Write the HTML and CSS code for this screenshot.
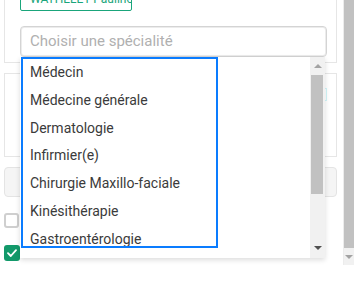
FILE: index.html
```html
<!DOCTYPE html>
<html lang="fr">
<head>
    <meta charset="UTF-8">
    <meta name="viewport" content="width=device-width, initial-scale=1.0">
    <title>Spécialité</title>
    <link rel="stylesheet" href="styles.css">
</head>
<body>
    <div class="viewport">
        <div class="page">
            <!-- Praticien -->
            <div class="card card-top">
                <button class="btn-outline">WATHELET Pauline</button>
                <div class="select">Choisir une spécialité</div>
            </div>

            <div class="card card-second">
                <div class="field-focus"></div>
            </div>

            <div class="btn-gray"></div>

            <div class="check-row"><span class="checkbox"></span></div>
            <div class="check-row checked">
                <span class="checkbox">
                    <svg width="10" height="8" viewBox="0 0 10 8"><path d="M1 4.2 L3.8 7 L9 1.2" fill="none" stroke="#fff" stroke-width="1.8" stroke-linecap="round" stroke-linejoin="round"/></svg>
                </span>
            </div>

            <!-- Dropdown -->
            <div class="dropdown">
                <div class="dropdown-list">
                    <ul class="options">
                        <li>Médecin</li>
                        <li>Médecine générale</li>
                        <li>Dermatologie</li>
                        <li>Infirmier(e)</li>
                        <li>Chirurgie Maxillo-faciale</li>
                        <li>Kinésithérapie</li>
                        <li>Gastroentérologie</li>
                    </ul>
                </div>
                <div class="scrollbar">
                    <div class="arrow up"></div>
                    <div class="thumb"></div>
                    <div class="track"></div>
                    <div class="arrow down"></div>
                </div>
            </div>
        </div>

        <div class="page-scrollbar">
            <div class="thumb"></div>
            <div class="arrow down"></div>
        </div>
    </div>
</body>
</html>
```

FILE: styles.css
```css
* {
    margin: 0;
    padding: 0;
    box-sizing: border-box;
}

body {
    font-family: Roboto, 'Liberation Sans', sans-serif;
    background: #fff;
    overflow: hidden;
}

.viewport {
    display: flex;
    height: 265px;
}

.page {
    flex: 1;
    position: relative;
    padding-left: 4px;
    padding-right: 6px;
    overflow: hidden;
}

.card {
    border: 1px solid #e6e6e6;
    background: #fff;
}

.card-top {
    margin-top: -34px;
    padding: 15px 9px 5px 15px;
}

.btn-outline {
    display: block;
    width: 112px;
    height: 29px;
    border: 1px solid #1aa57b;
    border-radius: 2px;
    background: #fff;
    color: #1aa57b;
    font-family: inherit;
    font-size: 12px;
    line-height: 20px;
    padding: 5px 0 0 9px;
    text-align: left;
    white-space: nowrap;
    overflow: hidden;
}

.select {
    margin-top: 15px;
    height: 31px;
    border: 1px solid #d4d4d4;
    border-radius: 4px;
    box-shadow: inset 0 0 0 1px #ececec;
    padding-left: 9px;
    font-size: 15px;
    line-height: 29px;
    color: #b0b0b0;
}

.card-second {
    margin-top: 10px;
    height: 84px;
    padding: 14px 9px 0 15px;
}

.field-focus {
    height: 13px;
    border: 1px solid #d2f6f9;
}

.btn-gray {
    margin-top: 10px;
    height: 30px;
    background: #f5f5f5;
    border: 1px solid #e4e4e4;
    border-radius: 4px;
}

.check-row {
    margin-top: 16px;
    height: 16px;
    display: flex;
}

.checkbox {
    width: 15px;
    height: 15px;
    border: 2px solid #cfcfcf;
    border-radius: 3px;
    display: flex;
    align-items: center;
    justify-content: center;
}

.checked .checkbox {
    width: 16px;
    height: 16px;
    border: none;
    background: #12996a;
}

/* dropdown panel */
.dropdown {
    position: absolute;
    left: 20px;
    top: 57px;
    width: 305px;
    height: 201px;
    background: #fff;
    box-shadow: 0 2px 5px rgba(0, 0, 0, 0.14);
    display: flex;
}

.dropdown-list {
    flex: 1;
    padding-left: 1px;
}

.options {
    list-style: none;
    width: 197px;
    height: 191px;
    border: 2px solid #0a7cff;
    overflow: hidden;
    padding-left: 7px;
}

.options li {
    height: 27.8px;
    line-height: 27px;
    font-size: 14px;
    color: #3b3b3b;
    white-space: nowrap;
}

.scrollbar {
    width: 15px;
    background: #f1f1f1;
    display: flex;
    flex-direction: column;
}

.scrollbar .thumb {
    height: 119px;
    margin: 0 2px 0 1px;
    background: #c1c1c1;
}

.scrollbar .track {
    flex: 1;
}

.arrow {
    height: 18px;
    position: relative;
}

.arrow::after {
    content: '';
    position: absolute;
    left: 4px;
    top: 7px;
    border-left: 4px solid transparent;
    border-right: 4px solid transparent;
}

.arrow.up::after {
    border-bottom: 4px solid #a3a3a3;
}

.arrow.down::after {
    top: 6px;
    border-top: 4px solid #505050;
}

/* page scrollbar */
.page-scrollbar {
    width: 11px;
    border-left: 1px solid #ececec;
    background: #f1f1f1;
    display: flex;
    flex-direction: column;
}

.page-scrollbar .thumb {
    flex: 1;
    background: #c1c1c1;
}

.page-scrollbar .arrow {
    height: 17px;
}

.page-scrollbar .arrow.down::after {
    left: 1px;
    top: 7px;
    border-top-color: #a3a3a3;
}
```
